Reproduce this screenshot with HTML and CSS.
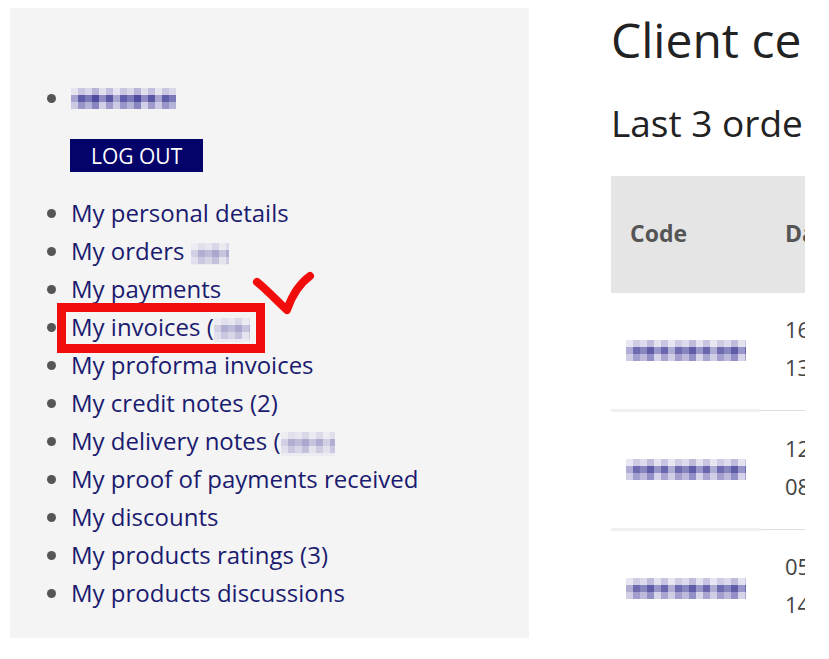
FILE: index.html
```html
<!DOCTYPE html>
<html lang="en">

<head>
	<meta charset="UTF-8" />
	<title>Client center</title>
	<link rel="stylesheet" href="styles.css">
</head>

<body>
	<div class="page">
		<aside class="account-menu">
			<ul>
				<li>
					<span class="pix pix-name"></span>
					<a class="logout" href="#">LOG OUT</a>
				</li>
				<li><a href="#">My personal details</a></li>
				<li><a href="#">My orders <span class="pix pix-orders"></span></a></li>
				<li><a href="#">My payments</a></li>
				<li><a href="#">My invoices (<span class="pix pix-invoices"></span></a></li>
				<li><a href="#">My proforma invoices</a></li>
				<li><a href="#">My credit notes (2)</a></li>
				<li><a href="#">My delivery notes (<span class="pix pix-delivery"></span></a></li>
				<li><a href="#">My proof of payments received</a></li>
				<li><a href="#">My discounts</a></li>
				<li><a href="#">My products ratings (3)</a></li>
				<li><a href="#">My products discussions</a></li>
			</ul>
		</aside>

		<main class="client-center">
			<h1>Client center</h1>
			<h2>Last 3 orders</h2>
			<table class="orders">
				<thead>
					<tr>
						<th class="col-code">Code</th>
						<th class="col-date">Date</th>
					</tr>
				</thead>
				<tbody>
					<tr>
						<td class="col-code"><span class="pix pix-code"></span></td>
						<td class="col-date">16.03.2023<br>13:42</td>
					</tr>
					<tr>
						<td class="col-code"><span class="pix pix-code"></span></td>
						<td class="col-date">12.01.2023<br>08:15</td>
					</tr>
					<tr>
						<td class="col-code"><span class="pix pix-code"></span></td>
						<td class="col-date">05.12.2022<br>14:27</td>
					</tr>
				</tbody>
			</table>
		</main>

		<!-- hand-drawn annotation on top of the screenshot -->
		<div class="mark-box"></div>
		<svg class="mark-check" width="70" height="50" viewBox="0 0 70 50">
			<path d="M7 14 C15 20 25 31 37 42 C41 30 49 16 60 8" fill="none" stroke="#f20d0d"
				stroke-width="8" stroke-linecap="round" stroke-linejoin="round" />
		</svg>
	</div>
</body>

</html>
```

FILE: styles.css
```css
html {
	background: #fff;
}

body {
	margin: 0;
	font-family: "Open Sans", Arial, sans-serif;
	background: #fff;
}

a {
	text-decoration: none;
}

.page {
	position: relative;
	display: flex;
	gap: 82px;
	padding: 8px 0 0 10px;
	height: 651px;
	overflow: hidden;
}

/* left menu */

.account-menu {
	flex: none;
	width: 519px;
	height: 630px;
	background: #f4f4f4;
}

.account-menu ul {
	margin: 0;
	padding: 71px 0 0 61px;
	font-size: 24px;
	line-height: 38px;
	color: #555;
}

.account-menu li a {
	color: #1b1b6f;
}

.logout {
	display: block;
	width: max-content;
	margin: 22px 0 22px -1px;
	padding: 0 21px;
	height: 33px;
	line-height: 34px;
	font-size: 21px;
	background: #03036a;
	color: #fff !important;
}

/* blurred data: three rows of pixel blocks */

.pix {
	display: inline-block;
	vertical-align: middle;
	height: 21px;
	background-color: #e4e2f0;
	background-image:
		linear-gradient(90deg, #e6e4f1 0 7px, #c9c6e2 7px 14px, #d9d7ea 14px 21px, #b7b4d8 21px 28px, #e1dfee 28px 35px, #c2bfdf 35px 42px),
		linear-gradient(90deg, #a8a5d1 0 7px, #5f5ca9 7px 14px, #7c79b9 14px 21px, #4f4c9f 21px 28px, #8e8bc5 28px 35px, #5a57a7 35px 42px),
		linear-gradient(90deg, #cbc9e3 0 7px, #9995c9 7px 14px, #b5b2d7 14px 21px, #8784c0 21px 28px, #d2d0e7 28px 35px, #9f9ccc 35px 42px);
	background-size: 42px 7px;
	background-position: 0 0, 0 7px, 0 14px;
	background-repeat: repeat-x;
}

.pix-name {
	width: 105px;
	margin-top: -4px;
}

.pix-orders {
	width: 38px;
	height: 22px;
	opacity: 0.45;
}

.pix-invoices {
	width: 36px;
	height: 24px;
	opacity: 0.45;
}

.pix-delivery {
	width: 54px;
	height: 24px;
	opacity: 0.45;
}

.pix-code {
	width: 120px;
	height: 21px;
	opacity: 0.9;
}

/* main column */

.client-center {
	flex: none;
	width: 194px;
	overflow: hidden;
	color: #222;
}

.client-center h1 {
	margin: 3px 0 0;
	font-size: 48px;
	line-height: 58px;
	font-weight: 400;
	white-space: nowrap;
}

.client-center h2 {
	margin: 32px 0 31px;
	font-size: 37px;
	line-height: 44px;
	font-weight: 400;
	white-space: nowrap;
}

.orders {
	width: 420px;
	border-collapse: collapse;
	white-space: nowrap;
}

.orders th {
	height: 113px;
	padding: 0 0 4px;
	background: #e5e5e5;
	color: #555;
	font-size: 23px;
	text-align: left;
}

.orders th.col-code {
	padding-left: 19px;
}

.orders th.col-date {
	padding-left: 24px;
}

.orders td {
	height: 109px;
	padding: 0 0 7px;
	font-size: 22px;
	line-height: 38px;
	color: #444;
}

.orders td.col-code {
	width: 150px;
	text-align: center;
}

.orders td.col-date {
	padding-left: 24px;
}

.orders tbody tr+tr td.col-code {
	border-top: 3px solid #f0f0f0;
}

.orders tbody tr+tr td.col-date {
	border-top: 1px solid #ddd;
}

/* annotation overlay */

.mark-box {
	position: absolute;
	left: 57px;
	top: 303px;
	width: 208px;
	height: 50px;
	box-sizing: border-box;
	border: 9px solid #f20d0d;
}

.mark-check {
	position: absolute;
	left: 250px;
	top: 268px;
}
```
